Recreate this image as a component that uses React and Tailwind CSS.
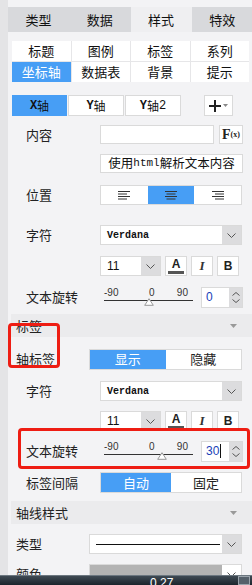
import React from "react";

const mono = "font-['Liberation_Mono',monospace]";

function Chevron() {
  return (
    <svg width="9" height="5" viewBox="0 0 9 5" fill="none" stroke="#555" strokeWidth="1">
      <path d="M0.5 0.5 L4.5 4.5 L8.5 0.5" />
    </svg>
  );
}

function Select({ children, w = "w-[142px]", arrowBg = "bg-[#dcdcde]", bodyBg = "bg-white" }) {
  return (
    <div className={`flex h-[20px] border border-[#dadada] ${w}`}>
      <div className={`flex-1 flex items-center pl-[6px] ${bodyBg}`}>{children}</div>
      <div className={`w-[19px] flex items-center justify-center ${arrowBg}`}>
        <Chevron />
      </div>
    </div>
  );
}

function Row({ label, top, h = "h-[20px]", section = false, children }) {
  return (
    <div className={`flex items-center ${h} ${top} ${section ? "pl-[8px]" : "pl-[18px]"} pr-[10px]`}>
      <div className={`${section ? "w-[73px]" : "w-[74px]"} text-[13px] text-[#222]`}>{label}</div>
      <div className="flex-1 flex items-center">{children}</div>
    </div>
  );
}

function AlignIcon({ dir }) {
  const lines = dir === "left"
    ? [[0, 12], [0, 9], [0, 12], [0, 9]]
    : dir === "center"
    ? [[0, 12], [1.5, 10.5], [0, 12], [1.5, 10.5]]
    : [[0, 12], [3, 12], [0, 12], [3, 12]];
  return (
    <svg width="12" height="9" viewBox="0 0 12 9" stroke="#333" strokeWidth="1">
      {lines.map(([a, b], i) => (
        <line key={i} x1={a} x2={b} y1={i * 2.5 + 0.5} y2={i * 2.5 + 0.5} />
      ))}
    </svg>
  );
}

function FontStyleRow({ top }) {
  return (
    <div className={`flex items-center h-[20px] ${top} pl-[92px]`}>
      <Select w="w-[61px]">
        <span className="text-[12px] text-[#111] font-['Liberation_Sans',sans-serif]">11</span>
      </Select>
      <div className="ml-[4px] w-[22px] h-[20px] border border-[#dadada] bg-white flex flex-col items-center justify-center">
        <span className="text-[12px] leading-[12px] font-bold font-['Liberation_Sans',sans-serif] text-[#222]">A</span>
        <div className="w-[16px] h-[3px] bg-[#555] mt-[1px]" />
      </div>
      <div className="ml-[4px] w-[22px] h-[20px] border border-[#dadada] bg-white flex items-center justify-center">
        <span className="text-[13px] italic font-bold font-['Liberation_Serif',serif] text-[#333]">I</span>
      </div>
      <div className="ml-[4px] w-[22px] h-[20px] border border-[#dadada] bg-white flex items-center justify-center">
        <span className="text-[12px] font-bold font-['Liberation_Sans',sans-serif] text-[#222]">B</span>
      </div>
    </div>
  );
}

function Slider({ pos }) {
  return (
    <div className="relative w-[93px] h-[20px] ml-[4px]">
      <div className="flex justify-between text-[10px] leading-[10px] text-[#333] font-['Liberation_Sans',sans-serif] w-[84px] pt-[1px]">
        <span>-90</span>
        <span className="ml-[8px]">0</span>
        <span>90</span>
      </div>
      <div className="absolute left-0 top-[13px] w-[89px] h-px bg-[#333]" />
      <svg className="absolute top-[11px]" style={{ left: pos }} width="10" height="8" viewBox="0 0 10 8">
        <path d="M5 0.7 L9.3 7.3 L0.7 7.3 Z" fill="#fff" stroke="#999" strokeWidth="1" />
      </svg>
    </div>
  );
}

function NumberInput({ value, cursor }) {
  return (
    <div className="ml-auto flex h-[21px] w-[42px] border border-[#dadada]">
      <div className="flex-1 bg-white flex items-center pl-[4px] text-[12px] text-[#1a3fb8] font-['Liberation_Sans',sans-serif]">
        {value}
        {cursor && <span className="w-px h-[14px] bg-[#111] ml-px" />}
      </div>
      <div className="w-[13px] bg-[#dcdcde] flex flex-col items-center justify-center gap-[3px]">
        <svg width="8" height="4" viewBox="0 0 8 4" fill="none" stroke="#555"><path d="M0.5 3.5 L4 0.5 L7.5 3.5" /></svg>
        <svg width="8" height="4" viewBox="0 0 8 4" fill="none" stroke="#555"><path d="M0.5 0.5 L4 3.5 L7.5 0.5" /></svg>
      </div>
    </div>
  );
}

function Header({ title, top }) {
  return (
    <div className={`${top} ml-[3px] h-[23px] bg-[#ebebed] flex items-center pl-[5px] pr-[16px]`}>
      <span className="text-[13px] text-[#222]">{title}</span>
      <svg className="ml-auto" width="7" height="4" viewBox="0 0 7 4"><path d="M0 0 L7 0 L3.5 4 Z" fill="#999" /></svg>
    </div>
  );
}

function Segmented({ items, active, w }) {
  return (
    <div className={`flex h-[21px] border border-[#dadada] bg-white ${w}`}>
      {items.map((it, i) => (
        <div
          key={i}
          className={`flex-1 flex items-center justify-center text-[13px] ${i === active ? "bg-[#479ef5] text-white" : "text-[#222]"}`}
        >
          {it}
        </div>
      ))}
    </div>
  );
}

export default function App() {
  const tabs = ["类型", "数据", "样式", "特效"];
  const sub = ["标题", "图例", "标签", "系列", "坐标轴", "数据表", "背景", "提示"];
  return (
    <div className="relative w-[252px] h-[585px] overflow-hidden flex bg-[#f3f3f5] font-['Noto_Sans_CJK_SC',sans-serif]">
      <div className="w-[8px] shrink-0 bg-[#e4e4e6]" />
      <div className="flex-1 flex flex-col">
        <div className="mt-[7px] h-[25px] grid grid-cols-4">
          {tabs.map((t, i) => (
            <div
              key={t}
              className={`flex items-center justify-center text-[13px] text-[#111] ${i === 2 ? "bg-[#efeff1]" : "bg-[#d8d9dc]"}`}
            >
              {t}
            </div>
          ))}
        </div>

        <div className="mt-[9px] ml-[4px] w-[237px] grid grid-cols-4 gap-px bg-[#e6e6e8]">
          {sub.map((t, i) => (
            <div
              key={t}
              className={`h-[20px] flex items-center justify-center text-[13px] ${i === 4 ? "bg-[#479ef5] text-white" : "bg-white text-[#111]"}`}
            >
              {t}
            </div>
          ))}
        </div>

        <div className="mt-[13px] ml-[4px] flex items-center h-[21px]">
          <div className="w-[55px] h-[21px] bg-[#479ef5] flex items-center justify-center text-[12px] text-[#111]">
            <span className={`${mono} font-bold`}>X</span>轴
          </div>
          <div className="ml-px w-[56px] h-[21px] bg-white border border-[#dadada] flex items-center justify-center text-[12px] text-[#111]">
            <span className={`${mono} font-bold`}>Y</span>轴
          </div>
          <div className="ml-px w-[56px] h-[21px] bg-white border border-[#dadada] flex items-center justify-center text-[12px] text-[#111]">
            <span className={`${mono} font-bold`}>Y</span>轴<span className={mono}>2</span>
          </div>
          <div className="ml-[23px] w-[29px] h-[21px] bg-white border border-[#dadada] flex items-center justify-center gap-[2px]">
            <svg width="12" height="12" viewBox="0 0 12 12"><path d="M0 6 H12 M6 0 V12" stroke="#222" strokeWidth="2" /></svg>
            <svg width="5" height="3" viewBox="0 0 5 3"><path d="M0 0 H5 L2.5 3 Z" fill="#888" /></svg>
          </div>
        </div>

        <Row label="内容" top="mt-[9px]" h="h-[19px]">
          <div className="w-[114px] h-[19px] bg-white border border-[#dadada]" />
          <div className="ml-[5px] w-[24px] h-[19px] bg-white border border-[#dadada] flex items-center justify-center font-['Liberation_Serif',serif] text-[#222]">
            <span className="text-[14px] font-bold leading-none">F</span>
            <span className="text-[8px] font-bold leading-none">(x)</span>
          </div>
        </Row>

        <div className="mt-[10px] pl-[92px] pr-[10px]">
          <div className="h-[19px] bg-white border border-[#dadada] flex items-center justify-center text-[12.5px] text-[#111]">
            使用<span className={`${mono} text-[11px]`}>html</span>解析文本内容
          </div>
        </div>

        <Row label="位置" top="mt-[12px]">
          <div className="flex w-[142px] h-[20px] border border-[#dadada] bg-white">
            <div className="flex-1 flex items-center justify-center"><AlignIcon dir="left" /></div>
            <div className="flex-1 flex items-center justify-center bg-[#479ef5]"><AlignIcon dir="center" /></div>
            <div className="flex-1 flex items-center justify-center"><AlignIcon dir="right" /></div>
          </div>
        </Row>

        <Row label="字符" top="mt-[20px]">
          <Select>
            <span className={`${mono} text-[10px] font-bold text-[#111]`}>Verdana</span>
          </Select>
        </Row>

        <FontStyleRow top="mt-[11px]" />

        <Row label="文本旋转" top="mt-[11px]">
          <Slider pos="40px" />
          <NumberInput value="0" />
        </Row>

        <Header title="标签" top="mt-[7px]" />

        <Row label="轴标签" top="mt-[11px]" h="h-[22px]" section>
          <Segmented items={["显示", "隐藏"]} active={0} w="w-[153px]" />
        </Row>

        <Row label="字符" top="mt-[11px]">
          <Select>
            <span className={`${mono} text-[10px] font-bold text-[#111]`}>Verdana</span>
          </Select>
        </Row>

        <FontStyleRow top="mt-[10px]" />

        <Row label="文本旋转" top="mt-[9px]" h="h-[22px]">
          <Slider pos="53px" />
          <NumberInput value="30" cursor />
        </Row>

        <Row label="标签间隔" top="mt-[10px]" h="h-[21px]">
          <Segmented items={["自动", "固定"]} active={0} w="w-[142px]" />
        </Row>

        <Header title="轴线样式" top="mt-[8px]" />

        <Row label="类型" top="mt-[10px]" section>
          <Select w="w-[153px]">
            <div className="w-[124px] h-px bg-[#111]" />
          </Select>
        </Row>

        <Row label="颜色" top="mt-[10px]" section>
          <Select w="w-[153px]" arrowBg="bg-white" bodyBg="bg-[#b3b3b3]">
            <span />
          </Select>
        </Row>
      </div>

      <div className="absolute left-[8px] top-[323px] w-[52px] h-[45px] border-[3px] border-[#ee1d13] rounded-[4px]" />
      <div className="absolute left-[18px] top-[428px] w-[232px] h-[41px] border-[3px] border-[#ee1d13] rounded-[4px]" />

      <div className="absolute left-0 right-0 bottom-0 h-[10px] border-t border-[#6c7780] bg-gradient-to-b from-[#3f4a54] to-[#1c252d] flex">
        <span className="ml-[150px] mt-[1px] text-[12px] leading-[12px] text-white font-['Liberation_Sans',sans-serif]">0.27</span>
        <div className="ml-auto mr-[2px] w-[12px] h-[9px] border border-[#9aa3ab] bg-[#55606a]" />
      </div>
    </div>
  );
}
